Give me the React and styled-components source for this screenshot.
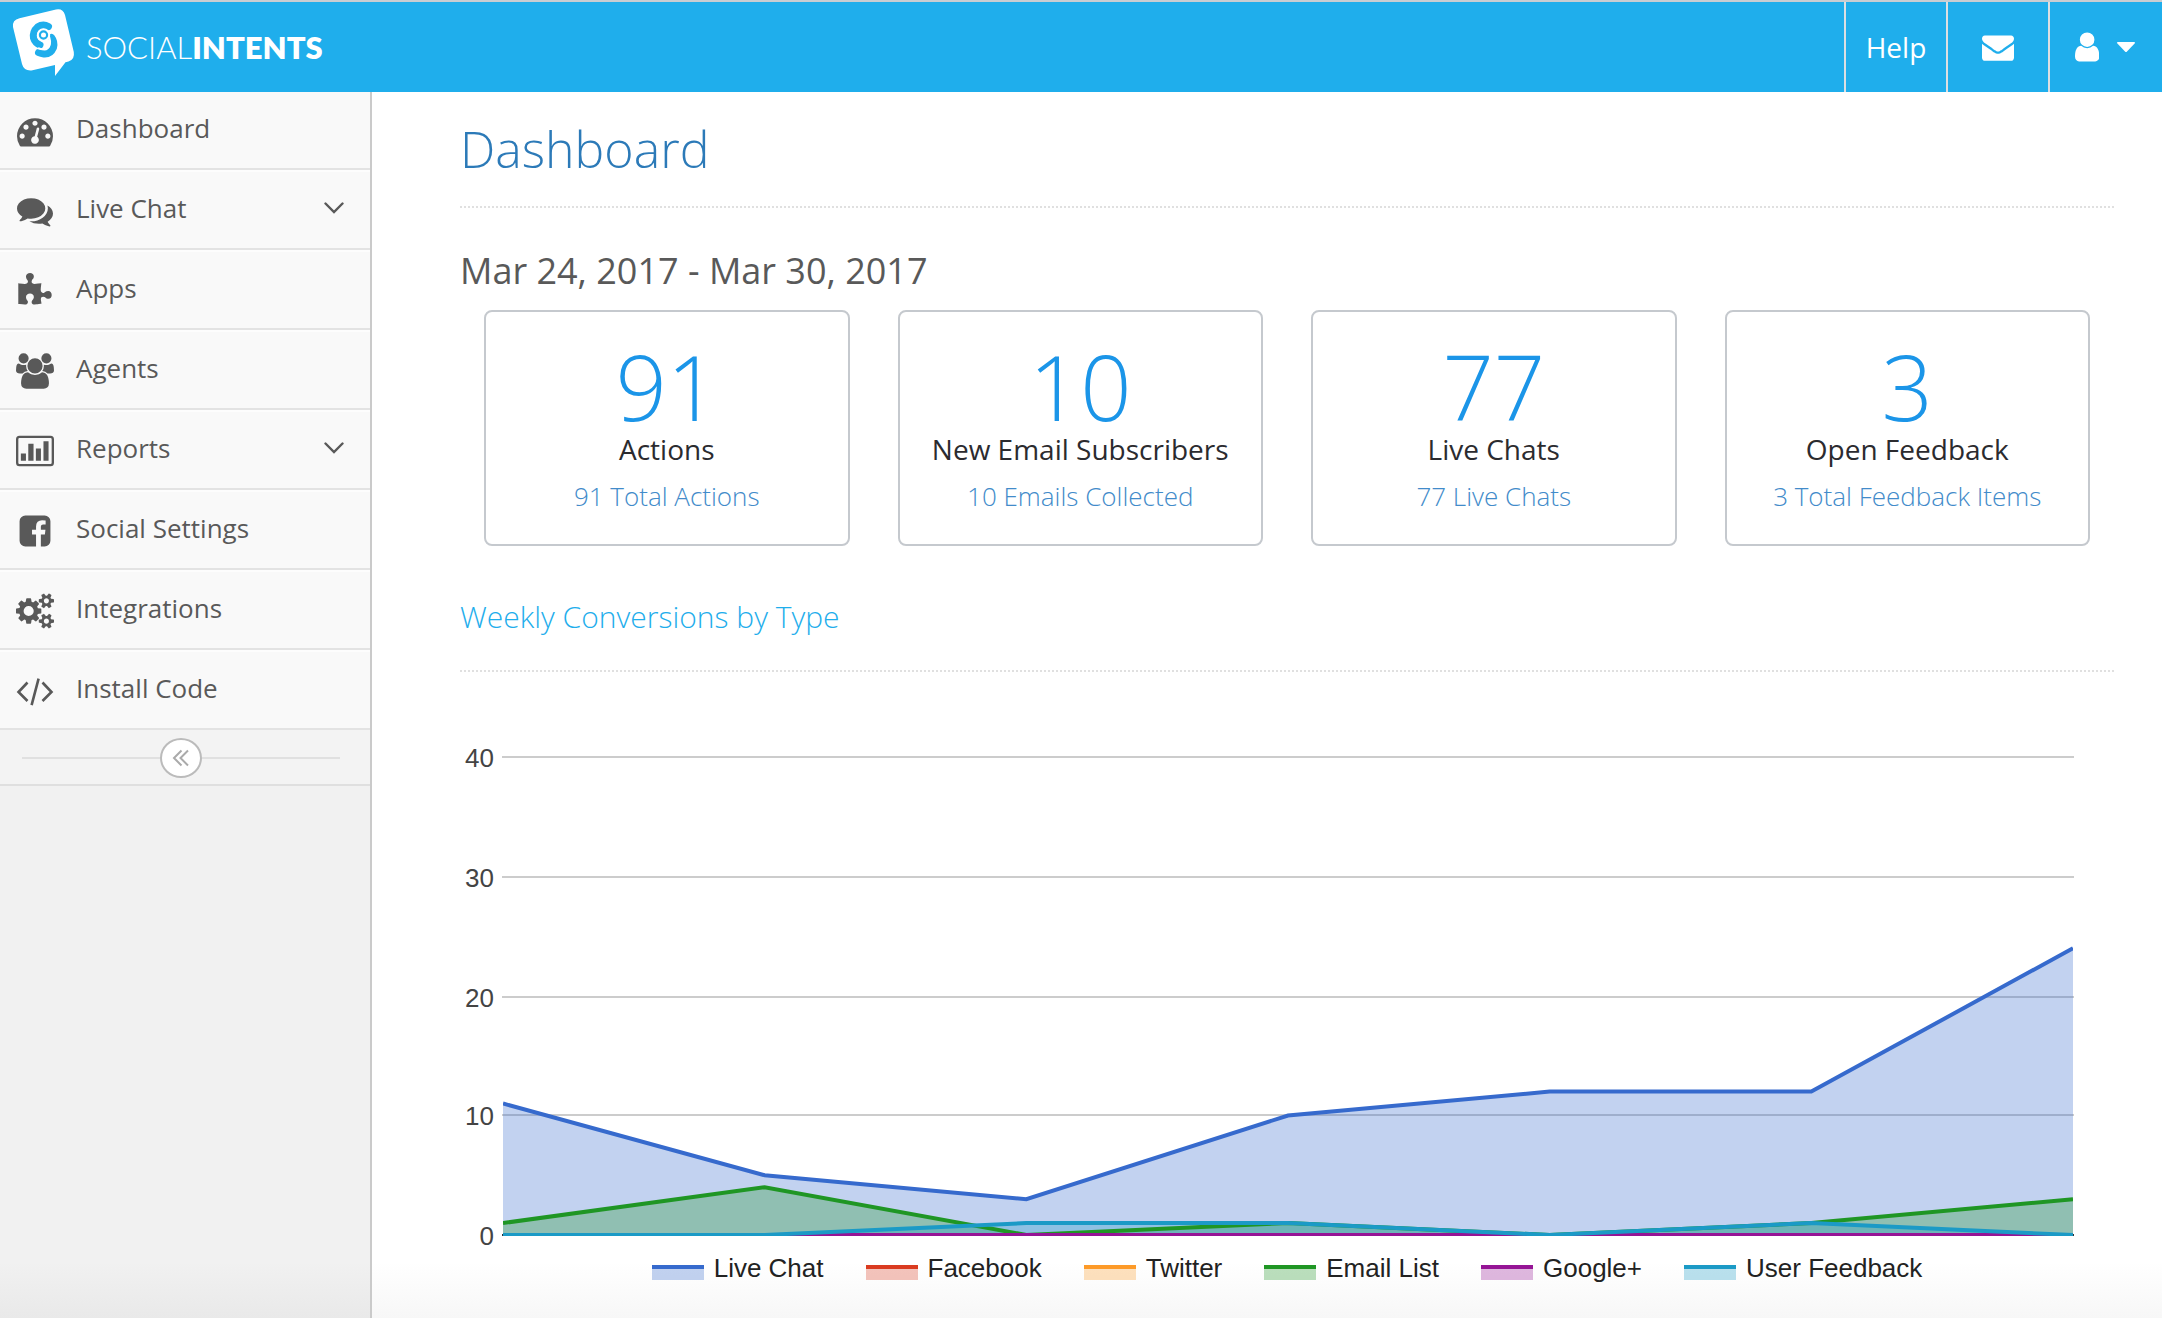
import React from "react";
import styled, { createGlobalStyle } from "styled-components";

const GlobalStyle = createGlobalStyle`
  *, *::before, *::after { box-sizing: border-box; }
  body {
    margin: 0;
    background: #fff;
    color: #595959;
    font-family: "Open Sans", "Noto Sans", sans-serif;
  }
  a { color: inherit; text-decoration: none; }
  button { font: inherit; color: inherit; background: none; border: 0; padding: 0; cursor: pointer; }
  h1, h2, p, ul { margin: 0; padding: 0; font-weight: inherit; }
  ul { list-style: none; }
  svg { display: block; }
`;

const Page = styled.div`
  min-height: 100vh;
  display: flex;
  flex-direction: column;
`;

const TopBar = styled.header`
  height: 92px;
  flex: none;
  display: flex;
  justify-content: space-between;
  background: #1faeec;
  border-top: 2px solid #c9cdd2;
  color: #fff;
`;

const Brand = styled.a`
  display: flex;
  align-items: flex-start;
  padding-top: 6px;
  padding-left: 12px;
  gap: 11px;
`;

const BrandName = styled.span`
  font-family: Lato, "Open Sans", sans-serif;
  font-size: 31px;
  line-height: 78px;
  font-weight: 300;
  strong { font-weight: 800; }
`;

const TopActions = styled.nav`
  display: flex;
`;

const TopButton = styled.button`
  width: ${(p) => (p.$wide ? "114px" : "102px")};
  display: flex;
  align-items: center;
  justify-content: center;
  gap: 16px;
  border-left: 2px solid #dcdfe2;
  font-size: 28px;
  line-height: 40px;
  color: #fff;
`;

const Body = styled.div`
  flex: 1;
  display: flex;
`;

const Sidebar = styled.aside`
  width: 372px;
  flex: none;
  background: linear-gradient(to top, #e9e9e9, #f1f1f1 56px);
  border-right: 2px solid #cacaca;
`;

const NavItem = styled.li`
  border-bottom: 2px solid #e3e3e3;
  background: #f9f9f9;
  & + & { box-shadow: inset 0 2px #fdfdfd; }
  & > * { padding-bottom: 2px; }
  &:first-child > * { height: 76px; padding-bottom: 4px; }
`;

const NavLink = styled.a`
  height: 78px;
  display: flex;
  align-items: center;
  padding-left: 16px;
  padding-right: 26px;
  font-size: 26px;
  line-height: 36px;
`;

const NavIcon = styled.span`
  width: 38px;
  margin-right: 22px;
  padding-top: 6px;
  display: flex;
  justify-content: center;
`;

const NavLabel = styled.span`
  flex: 1;
`;

const Collapse = styled.div`
  height: 56px;
  display: flex;
  align-items: center;
  padding: 2px 30px 0 22px;
  border-bottom: 2px solid #dfdfdf;
  background: #f3f3f3;
  &::before, &::after { content: ""; height: 2px; background: #e0e0e0; }
  &::before { width: 138px; }
  &::after { flex: 1; }
`;

const CollapseButton = styled.button`
  width: 42px;
  height: 40px;
  display: flex;
  align-items: center;
  justify-content: center;
  border: 2px solid #bbb;
  border-radius: 50%;
  background: #fff;
`;

const Main = styled.main`
  flex: 1;
  min-width: 0;
  padding: 20px 48px 0 88px;
  background: linear-gradient(to top, #f7f7f7, #fff 56px);
`;

const Title = styled.h1`
  height: 96px;
  padding-top: 4px;
  border-bottom: 2px dotted #e0e0e0;
  font-size: 50px;
  line-height: 66px;
  font-weight: 300;
  color: #2c7ab8;
`;

const Period = styled.p`
  padding: 38px 0 14px;
  font-size: 36px;
  line-height: 50px;
`;

const Cards = styled.section`
  display: grid;
  grid-template-columns: repeat(4, 1fr);
  gap: 48px;
  padding: 0 24px;
`;

const Card = styled.article`
  height: 236px;
  display: flex;
  flex-direction: column;
  align-items: center;
  padding-top: 30px;
  border: 2px solid #c5c9ce;
  border-radius: 8px;
  background: #fff;
`;

const CardValue = styled.div`
  font-size: 90px;
  line-height: 88px;
  font-weight: 300;
  color: #1b95e8;
`;

const CardLabel = styled.div`
  font-size: 28px;
  line-height: 38px;
  color: #2b2b2f;
`;

const CardLink = styled.a`
  padding-top: 10px;
  font-size: 26px;
  line-height: 36px;
  font-weight: 300;
  && { color: #428bca; }
`;

const SectionTitle = styled.h2`
  margin-top: 50px;
  height: 76px;
  border-bottom: 2px dotted #e0e0e0;
  font-size: 30px;
  line-height: 42px;
  font-weight: 300;
  color: #1faeec;
`;

const Chart = styled.svg`
  width: 100%;
  height: auto;
  font-family: "Liberation Sans", Arial, sans-serif;
  font-size: 26px;
`;

const Legend = styled.ul`
  display: flex;
  flex-wrap: wrap;
  justify-content: center;
  gap: 0 42px;
  padding-bottom: 30px;
  font-family: "Liberation Sans", Arial, sans-serif;
  font-size: 26px;
  line-height: 32px;
  color: #222;
`;

const LegendItem = styled.li`
  display: flex;
  align-items: center;
  gap: 10px;
  &::before {
    content: "";
    width: 52px;
    height: 15px;
    margin-top: 8px;
    border-top: 4px solid ${(p) => p.$color};
    background: ${(p) => p.$color}4d;
    background-clip: padding-box;
  }
`;

const glyphs = {
  gauge: ["0 0 1792 1792", "M384 1152q0-53-37.5-90.5t-90.5-37.5-90.5 37.5-37.5 90.5 37.5 90.5 90.5 37.5 90.5-37.5 37.5-90.5zm192-448q0-53-37.5-90.5t-90.5-37.5-90.5 37.5-37.5 90.5 37.5 90.5 90.5 37.5 90.5-37.5 37.5-90.5zm428 481l101-382q6-26-7.5-48.5t-38.5-29.5-48 6.5-30 39.5l-101 382q-60 5-107 43.5t-63 98.5q-20 77 20 146t117 89 146-20 89-117q16-60-6-117t-72-91zm660-33q0-53-37.5-90.5t-90.5-37.5-90.5 37.5-37.5 90.5 37.5 90.5 90.5 37.5 90.5-37.5 37.5-90.5zm-640-640q0-53-37.5-90.5t-90.5-37.5-90.5 37.5-37.5 90.5 37.5 90.5 90.5 37.5 90.5-37.5 37.5-90.5zm448 192q0-53-37.5-90.5t-90.5-37.5-90.5 37.5-37.5 90.5 37.5 90.5 90.5 37.5 90.5-37.5 37.5-90.5zm320 448q0 261-141 483-19 29-54 29h-1402q-35 0-54-29-141-221-141-483 0-182 71-348t191-286 286-191 348-71 348 71 286 191 191 286 71 348z"],
  comments: ["0 0 1792 1792", "M1408 768q0 139-94 257t-256.5 186.5-353.5 68.5q-86 0-176-16-124 88-278 128-36 9-86 16h-3q-11 0-20.5-8t-11.5-21q-1-3-1-6.5t.5-6.5 2-6l2.5-5 3.5-5.5 4-5 4.5-5 4-4.5q5-6 23-25t26-29.5 22.5-29 25-38.5 20.5-44q-124-72-195-177t-71-224q0-139 94-257t256.5-186.5 353.5-68.5 353.5 68.5 256.5 186.5 94 257zm384 256q0 120-71 224.5t-195 176.5q10 24 20.5 44t25 38.5 22.5 29 26 29.5 23 25q1 1 4 4.5t4.5 5 4 5 3.5 5.5l2.5 5 2 6 .5 6.5-1 6.5q-3 14-13 22t-22 7q-50-7-86-16-154-40-278-128-90 16-176 16-271 0-472-132 58 4 88 4 161 0 309-45t264-129q125-92 192-212t67-254q0-77-23-152 129 71 204 178t75 230z"],
  puzzle: ["0 0 1792 1792", "M1728 1098q0 81-44.5 135t-123.5 54q-41 0-77.5-17.5t-59-38-56.5-38-71-17.5q-110 0-110 124 0 39 16 115t15 115v5q-22 0-33 1-34 3-97.5 11.5t-115.5 13.5-98 5q-61 0-103-26.5t-42-83.5q0-37 17.5-71t38-56.5 38-59 17.5-77.5q0-79-54-123.5t-135-44.5q-84 0-143 45.5t-59 127.5q0 43 15 83t33.5 64.5 33.5 53 15 50.5q0 45-46 89-37 35-117 35-95 0-245-24-9-2-27.5-4t-27.5-4l-13-2q-1 0-3-1-2 0-2-1v-1024q2 1 17.5 3.5t34 5 21.5 3.5q150 24 245 24 80 0 117-35 46-44 46-89 0-22-15-50.5t-33.5-53-33.5-64.5-15-83q0-82 59-127.5t144-45.5q80 0 134 44.5t54 123.5q0 41-17.5 77.5t-38 59-38 56.5-17.5 71q0 57 42 83.5t103 26.5q64 0 180-15t163-17v2q-1 2-3.5 17.5t-5 34-3.5 21.5q-24 150-24 245 0 80 35 117 44 46 89 46 22 0 50.5-15t53-33.5 64.5-33.5 83-15q82 0 127.5 59t45.5 143z"],
  users: ["0 0 1920 1792", "M593 896q-162 5-265 128h-134q-82 0-138-40.5t-56-118.5q0-353 124-353 6 0 43.5 21t97.5 42.5 119 21.5q67 0 133-23-5 37-5 66 0 139 81 256zm1071 637q0 120-73 189.5t-194 69.5h-874q-121 0-194-69.5t-73-189.5q0-53 3.5-103.5t14-109 26.5-108.5 43-97.5 62-81 85.5-53.5 111.5-20q10 0 43 21.5t73 48 107 48 135 21.5 135-21.5 107-48 73-48 43-21.5q61 0 111.5 20t85.5 53.5 62 81 43 97.5 26.5 108.5 14 109 3.5 103.5zm-1024-1277q0 106-75 181t-181 75-181-75-75-181 75-181 181-75 181 75 75 181zm704 384q0 159-112.5 271.5t-271.5 112.5-271.5-112.5-112.5-271.5 112.5-271.5 271.5-112.5 271.5 112.5 112.5 271.5zm576 225q0 78-56 118.5t-138 40.5h-134q-103-123-265-128 81-117 81-256 0-29-5-66 66 23 133 23 59 0 119-21.5t97.5-42.5 43.5-21q124 0 124 353zm-128-609q0 106-75 181t-181 75-181-75-75-181 75-181 181-75 181 75 75 181z"],
  facebook: ["0 0 1792 1792", "M1376 128q119 0 203.5 84.5t84.5 203.5v960q0 119-84.5 203.5t-203.5 84.5h-188v-595h199l30-232h-229v-148q0-56 23.5-84t91.5-28l122-1v-207q-63-9-178-9-136 0-217.5 80t-81.5 226v171h-200v232h200v595h-532q-119 0-203.5-84.5t-84.5-203.5v-960q0-119 84.5-203.5t203.5-84.5h960z"],
  cogs: ["0 0 1920 1792", "M896 896q0-106-75-181t-181-75-181 75-75 181 75 181 181 75 181-75 75-181zm768 512q0-52-38-90t-90-38-90 38-38 90q0 53 37.5 90.5t90.5 37.5 90.5-37.5 37.5-90.5zm0-1024q0-52-38-90t-90-38-90 38-38 90q0 53 37.5 90.5t90.5 37.5 90.5-37.5 37.5-90.5zm-384 421v185q0 10-7 19.5t-16 10.5l-155 24q-11 35-32 76 34 48 90 115 7 11 7 20 0 12-7 19-23 30-82.5 89.5t-78.5 59.5q-11 0-21-7l-115-90q-37 19-77 31-11 108-23 155-7 24-30 24h-186q-11 0-20-7.5t-10-17.5l-23-153q-34-10-75-31l-118 89q-7 7-20 7-11 0-21-8-144-133-144-160 0-9 7-19 10-14 41-53t47-61q-23-44-35-82l-152-24q-10-1-17-9.5t-7-19.5v-185q0-10 7-19.5t16-10.5l155-24q11-35 32-76-34-48-90-115-7-11-7-20 0-12 7-20 22-30 82-89t79-59q11 0 21 7l115 90q34-18 77-32 11-108 23-154 7-24 30-24h186q11 0 20 7.5t10 17.5l23 153q34 10 75 31l118-89q8-7 20-7 11 0 21 8 144 133 144 160 0 8-7 19-12 16-42 54t-45 60q23 48 34 82l152 23q10 2 17 10.5t7 19.5zm640 533v140q0 16-149 31-12 27-30 52 51 113 51 138 0 4-4 7-122 71-124 71-8 0-46-47t-52-68q-20 2-30 2t-30-2q-14 21-52 68t-46 47q-2 0-124-71-4-3-4-7 0-25 51-138-18-25-30-52-149-15-149-31v-140q0-16 149-31 13-29 30-52-51-113-51-138 0-4 4-7 4-2 35-20t59-34 30-16q8 0 46 46.5t52 67.5q20-2 30-2t30 2q51-71 92-112l6-2q4 0 124 70 4 3 4 7 0 25-51 138 17 23 30 52 149 15 149 31zm0-1024v140q0 16-149 31-12 27-30 52 51 113 51 138 0 4-4 7-122 71-124 71-8 0-46-47t-52-68q-20 2-30 2t-30-2q-14 21-52 68t-46 47q-2 0-124-71-4-3-4-7 0-25 51-138-18-25-30-52-149-15-149-31v-140q0-16 149-31 13-29 30-52-51-113-51-138 0-4 4-7 4-2 35-20t59-34 30-16q8 0 46 46.5t52 67.5q20-2 30-2t30 2q51-71 92-112l6-2q4 0 124 70 4 3 4 7 0 25-51 138 17 23 30 52 149 15 149 31z"],
  envelope: ["0 0 1792 1792", "M1792 710v794q0 66-47 113t-113 47h-1472q-66 0-113-47t-47-113v-794q44 49 101 87 362 246 497 345 57 42 92.5 65.5t94.5 48 110 24.5h2q51 0 110-24.5t94.5-48 92.5-65.5q170-123 498-345 57-39 100-87zm0-294q0 79-49 151t-122 123q-376 261-468 325-10 7-42.5 31t-54 38.5-52 32.5-57.5 27-50 9h-2q-23 0-50-9t-57.5-27-52-32.5-54-38.5-42.5-31q-91-64-262-182.5t-205-142.5q-62-42-117-115.5t-55-136.5q0-78 41.5-130t118.5-52h1472q65 0 112.5 47t47.5 113z"],
  user: ["256 0 1280 1792", "M1536 1399q0 109-62.5 187t-150.5 78h-854q-88 0-150.5-78t-62.5-187q0-85 8.5-160.5t31.5-152 58.5-131 94-89 134.5-34.5q131 128 313 128t313-128q76 0 134.5 34.5t94 89 58.5 131 31.5 152 8.5 160.5zm-256-887q0 159-112.5 271.5t-271.5 112.5-271.5-112.5-112.5-271.5 112.5-271.5 271.5-112.5 271.5 112.5 112.5 271.5z"],
};

function Glyph({ name, height = 36 }) {
  const [viewBox, d] = glyphs[name];
  return (
    <svg viewBox={viewBox} height={height} fill="currentColor" aria-hidden="true">
      <path d={d} />
    </svg>
  );
}

function BarChartIcon() {
  return (
    <svg width="39" height="32" viewBox="0 0 39 32" fill="currentColor" aria-hidden="true">
      <rect x="1.2" y="1.5" width="36.6" height="29" rx="2.4" fill="none" stroke="currentColor" strokeWidth="2.4" />
      <path d="M5 18.5h5.2V26H5zM12.6 8.5h5.4V26h-5.4zM20.4 13.5h5.2V26h-5.2zM28.2 6h5.2v20h-5.2z" />
    </svg>
  );
}

function CodeIcon() {
  return (
    <svg width="38" height="32" viewBox="0 -3 38 32" fill="none" stroke="currentColor" strokeWidth="2.6" aria-hidden="true">
      <path d="M11.5 4.5L2.5 14l9 9M26.5 4.5l9 9.500-9 9M22.6.6l-7 26.6" />
    </svg>
  );
}

function Chevron() {
  return (
    <svg width="20" height="12" viewBox="0 0 20 12" fill="none" stroke="currentColor" strokeWidth="2.4" strokeLinecap="round" aria-hidden="true">
      <path d="M1.5 1.5L10 10l8.500-8.500" />
    </svg>
  );
}

function LogoMark() {
  return (
    <svg width="63" height="68" viewBox="12 8 63 68" aria-hidden="true">
      <path
        fill="#fff"
        d="M19.500 18.200L56 9.400Q63 8 65 15L73.800 52Q75 59.500 68.500 61.500L65.500 62.200L55 76V65L32.500 70.300Q24 71.500 22 64L13 27Q12 20 19.500 18.200Z"
      />
      <g fill="none" strokeLinecap="round">
        <path stroke="#1faeec" strokeWidth="7" d="M48.500 26.500Q43 23.500 37.500 27Q32.500 31.500 33.500 38Q35 43 40 45" />
        <path stroke="#1faeec" strokeWidth="7" d="M51.500 37.500Q55 42 53.500 47.500Q50.500 54.500 44 54Q41 53.500 38.500 52.500" />
        <path stroke="#fff" strokeWidth="2.400" d="M49 37Q51.500 45 47 48Q43 50 39 48.500" />
        <circle cx="43.500" cy="35" r="5.200" fill="#fff" stroke="#fff" strokeWidth="3" />
        <circle cx="43.500" cy="35" r="3.600" fill="#fff" stroke="#1faeec" strokeWidth="2.200" />
      </g>
    </svg>
  );
}

const menu = [
  { label: "Dashboard", icon: <Glyph name="gauge" /> },
  { label: "Live Chat", icon: <Glyph name="comments" />, expandable: true },
  { label: "Apps", icon: <Glyph name="puzzle" /> },
  { label: "Agents", icon: <Glyph name="users" /> },
  { label: "Reports", icon: <BarChartIcon />, expandable: true },
  { label: "Social Settings", icon: <Glyph name="facebook" /> },
  { label: "Integrations", icon: <Glyph name="cogs" /> },
  { label: "Install Code", icon: <CodeIcon /> },
];

const stats = [
  { value: 91, label: "Actions", link: "91 Total Actions" },
  { value: 10, label: "New Email Subscribers", link: "10 Emails Collected" },
  { value: 77, label: "Live Chats", link: "77 Live Chats" },
  { value: 3, label: "Open Feedback", link: "3 Total Feedback Items" },
];

const series = [
  { name: "Live Chat", color: "#366acd", data: [11, 5, 3, 10, 12, 12, 24] },
  { name: "Facebook", color: "#da3b20", data: [0, 0, 0, 0, 0, 0, 0] },
  { name: "Twitter", color: "#fd9a28", data: [0, 0, 0, 0, 0, 0, 0] },
  { name: "Email List", color: "#1f9624", data: [1, 4, 0, 1, 0, 1, 3] },
  { name: "Google+", color: "#951495", data: [0, 0, 0, 0, 0, 0, 0] },
  { name: "User Feedback", color: "#1b9ac6", data: [0, 0, 1, 1, 0, 1, 0] },
];

const plot = { left: 43, right: 1613, base: 563, unit: 11.95 };
const px = (i) => plot.left + (i * (plot.right - plot.left)) / 6;
const py = (v) => plot.base - v * plot.unit;
const gridTop = (v) => Math.floor(py(v) / 2) * 2;

function ConversionsChart() {
  return (
    <Chart viewBox="0 0 1654 580" role="img" aria-label="Weekly conversions by type">
      <defs>
        <clipPath id="plot-area">
          <rect x={plot.left} y="60" width={plot.right - plot.left} height={plot.base - 59} />
        </clipPath>
      </defs>
      {[40, 30, 20, 10, 0].map((v) => (
        <g key={v}>
          <rect x="42" y={gridTop(v)} width="1572" height="2" fill={v ? "#ccc" : "#333"} />
          <text x="34" y={gridTop(v) + 11} textAnchor="end" fill="#444">{v}</text>
        </g>
      ))}
      <g clipPath="url(#plot-area)">
        {series.map((s) => (
          <polygon
            key={s.name}
            fill={s.color}
            fillOpacity="0.3"
            points={`${px(0)},${py(0)} ${s.data.map((v, i) => `${px(i)},${py(v)}`).join(" ")} ${px(6)},${py(0)}`}
          />
        ))}
        {series.map((s) => (
          <polyline
            key={s.name}
            fill="none"
            stroke={s.color}
            strokeWidth="4"
            points={s.data.map((v, i) => `${px(i)},${py(v)}`).join(" ")}
          />
        ))}
      </g>
    </Chart>
  );
}

export default function App() {
  return (
    <Page>
      <GlobalStyle />
      <TopBar>
        <Brand href="#">
          <LogoMark />
          <BrandName>SOCIAL<strong>INTENTS</strong></BrandName>
        </Brand>
        <TopActions>
          <TopButton type="button">Help</TopButton>
          <TopButton type="button" aria-label="Messages"><Glyph name="envelope" height={32} /></TopButton>
          <TopButton type="button" aria-label="Account" $wide>
            <Glyph name="user" height={34} />
            <svg width="22" height="12" viewBox="0 0 22 12" fill="#fff" aria-hidden="true">
              <path d="M3 1h16q2 0 .6 1.500L12 10.500q-1 1-2 0L2.400 2.500Q1 1 3 1z" />
            </svg>
          </TopButton>
        </TopActions>
      </TopBar>
      <Body>
        <Sidebar>
          <nav>
            <ul>
              {menu.map((m) => (
                <NavItem key={m.label}>
                  <NavLink href="#">
                    <NavIcon>{m.icon}</NavIcon>
                    <NavLabel>{m.label}</NavLabel>
                    {m.expandable && <Chevron />}
                  </NavLink>
                </NavItem>
              ))}
            </ul>
          </nav>
          <Collapse>
            <CollapseButton type="button" aria-label="Collapse menu">
              <svg width="18" height="18" viewBox="0 0 18 18" fill="none" stroke="#aaa" strokeWidth="2" aria-hidden="true">
                <path d="M9.500 1.500L2 9l7.500 7.500M16 1.500L8.500 9l7.500 7.500" />
              </svg>
            </CollapseButton>
          </Collapse>
        </Sidebar>
        <Main>
          <Title>Dashboard</Title>
          <Period>Mar 24, 2017 - Mar 30, 2017</Period>
          <Cards>
            {stats.map((s) => (
              <Card key={s.label}>
                <CardValue>{s.value}</CardValue>
                <CardLabel>{s.label}</CardLabel>
                <CardLink href="#">{s.link}</CardLink>
              </Card>
            ))}
          </Cards>
          <SectionTitle>Weekly Conversions by Type</SectionTitle>
          <ConversionsChart />
          <Legend>
            {series.map((s) => (
              <LegendItem key={s.name} $color={s.color}>{s.name}</LegendItem>
            ))}
          </Legend>
        </Main>
      </Body>
    </Page>
  );
}
